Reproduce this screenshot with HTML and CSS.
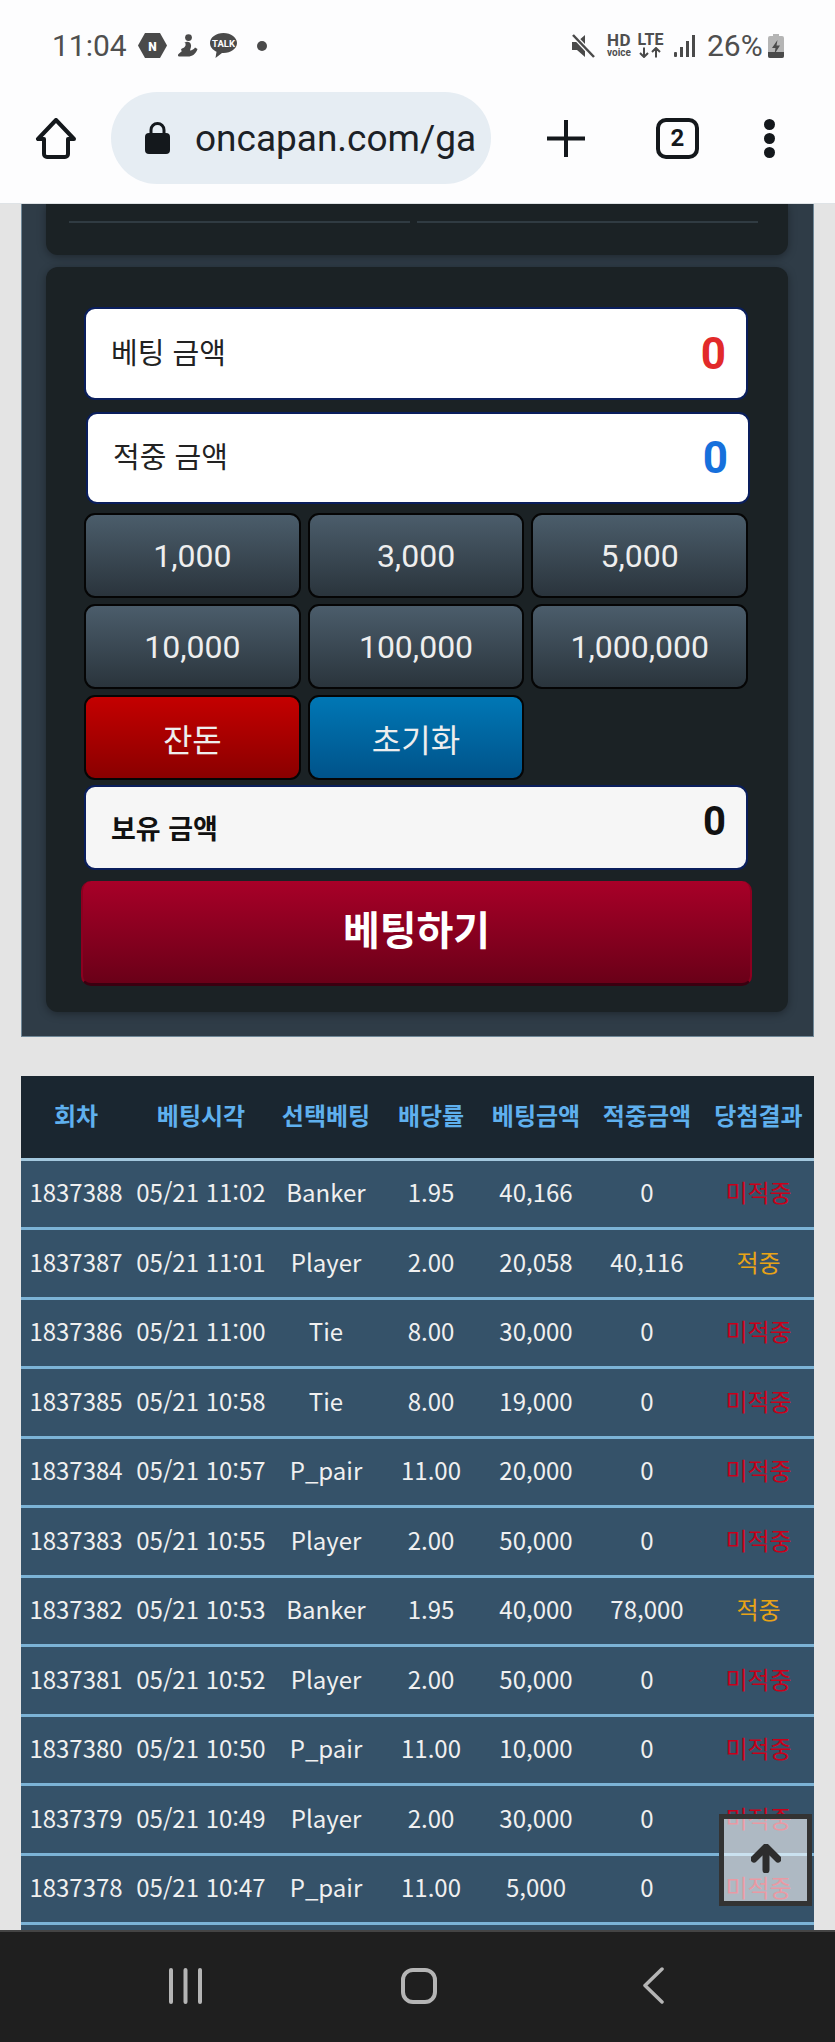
FILE: index.html
```html
<!DOCTYPE html>
<html lang="ko">
<head>
  <meta charset="UTF-8" />
  <meta name="viewport" content="width=device-width, initial-scale=1.0" />
  <title>oncapan</title>
  <link rel="stylesheet" href="styles.css">
</head>
<body>
  <!-- 상태바 + 브라우저 툴바 -->
  <header class="phone-top">
    <div class="status-bar">
      <div class="status-left">
        <span class="clock">11:04</span>
        <svg class="ico-n" viewBox="0 0 29 25"><polygon points="7,0 22,0 29,12.5 22,25 7,25 0,12.5" fill="#4a4a4a"/><text x="14.5" y="17.5" text-anchor="middle" class="svg-n">N</text></svg>
        <svg class="ico-person" viewBox="0 0 20 23"><circle cx="10.5" cy="3.6" r="3.4" fill="#4a4a4a"/><path d="M6.5 8.5c3-1.5 6-.5 6.5 2.500 .3 2-.5 3.500-1 5.500 2-.2 4-1.200 5-3l2.500 1.500c-1.500 5-5.500 7.500-9.500 7.500H1.500c-1.500 0-2-1.500-1-2.500l3.500-3c-1.500-1-1-2 0-2.500 1.500-.5 3-1.500 3.500-3 .2-1 .1-2-.5-3.500z" fill="#4a4a4a"/></svg>
        <svg class="ico-talk" viewBox="0 0 27 25"><path d="M13.500 0C6 0 0 4.400 0 10c0 3.700 2.600 6.900 6.500 8.700L5.500 25l6.500-5c.5 0 1 .1 1.500 .1 7.500 0 13.500-4.500 13.500-10S21 0 13.500 0z" fill="#4a4a4a"/><text x="13.500" y="13.500" text-anchor="middle" class="svg-talk">TALK</text></svg>
        <span class="dot"></span>
      </div>
      <div class="status-right">
        <svg class="ico-mute" viewBox="0 0 23 24"><path d="M0 8h5l8-7v22l-8-7H0z" fill="#4a4a4a"/><path d="M1 1l21 22" stroke="#fdfdfe" stroke-width="5"/><path d="M1 1l21 22" stroke="#4a4a4a" stroke-width="2.500"/></svg>
        <div class="hd"><b>HD</b><span>voice</span></div>
        <div class="lte"><b>LTE</b><svg viewBox="0 0 24 10"><path d="M6 0v9M2 5.500l4 4 4-4M18 10V1M14 4.500l4-4 4 4" fill="none" stroke="#4a4a4a" stroke-width="2"/></svg></div>
        <svg class="ico-signal" viewBox="0 0 21 22"><rect x="0" y="17" width="3" height="5" rx="1" fill="#4a4a4a"/><rect x="6" y="12" width="3" height="10" fill="#4a4a4a"/><rect x="12" y="6" width="3" height="16" fill="#4a4a4a"/><rect x="18" y="0" width="3" height="22" fill="#4a4a4a"/></svg>
        <span class="batt-text">26%</span>
        <svg class="ico-batt" viewBox="0 0 16 24"><path d="M5 0h6v2h3a2 2 0 0 1 2 2v18a2 2 0 0 1-2 2H2a2 2 0 0 1-2-2V4a2 2 0 0 1 2-2h3z" fill="#b5b5b5"/><path d="M0 18h16v4a2 2 0 0 1-2 2H2a2 2 0 0 1-2-2z" fill="#4a4a4a"/><path d="M9.500 6L4 14h3.500L6.500 20 12 11.500H8.500z" fill="#4a4a4a"/></svg>
      </div>
    </div>
    <div class="toolbar">
      <svg class="ico-home" viewBox="0 0 42 41"><path d="M21 2L3 21h6v15a3 3 0 0 0 3 3h18a3 3 0 0 0 3-3V21h6z" fill="none" stroke="#14181c" stroke-width="4" stroke-linejoin="round"/></svg>
      <div class="url-pill">
        <svg class="ico-lock" viewBox="0 0 25 32"><path d="M6 13V8a6.500 6.500 0 0 1 13 0v5" fill="none" stroke="#14181c" stroke-width="3"/><rect x="0" y="11" width="25" height="21" rx="4" fill="#14181c"/></svg>
        <span class="url-text">oncapan.com/ga</span>
      </div>
      <svg class="ico-plus" viewBox="0 0 38 37"><path d="M19 0v37M0 18.500h38" stroke="#14181c" stroke-width="4" stroke-linecap="round"/></svg>
      <div class="tab-count">2</div>
      <div class="kebab"><span></span><span></span><span></span></div>
    </div>
  </header>

  <main class="page">
    <section class="outer-panel">
      <div class="inner-panel top-stub">
        <div class="stub-lines"><span></span><span></span></div>
      </div>
      <div class="inner-panel bet-panel">
        <div class="amount-box">
          <span class="amount-label">베팅 금액</span>
          <span class="amount-val red">0</span>
        </div>
        <div class="amount-box shifted">
          <span class="amount-label">적중 금액</span>
          <span class="amount-val blue">0</span>
        </div>
        <div class="chip-grid">
          <button class="chip">1,000</button>
          <button class="chip">3,000</button>
          <button class="chip">5,000</button>
          <button class="chip">10,000</button>
          <button class="chip">100,000</button>
          <button class="chip">1,000,000</button>
          <button class="chip chip-red">잔돈</button>
          <button class="chip chip-blue">초기화</button>
        </div>
        <div class="amount-box holding">
          <span class="amount-label">보유 금액</span>
          <span class="amount-val">0</span>
        </div>
        <button class="bet-btn">베팅하기</button>
      </div>
    </section>

    <table class="history">
      <colgroup>
        <col class="c1"><col class="c2"><col class="c3"><col class="c4"><col class="c5"><col class="c6"><col class="c7">
      </colgroup>
      <thead>
        <tr><th>회차</th><th>베팅시각</th><th>선택베팅</th><th>배당률</th><th>베팅금액</th><th>적중금액</th><th>당첨결과</th></tr>
      </thead>
      <tbody>
        <tr><td>1837388</td><td>05/21 11:02</td><td>Banker</td><td>1.95</td><td>40,166</td><td>0</td><td class="miss">미적중</td></tr>
        <tr><td>1837387</td><td>05/21 11:01</td><td>Player</td><td>2.00</td><td>20,058</td><td>40,116</td><td class="hit">적중</td></tr>
        <tr><td>1837386</td><td>05/21 11:00</td><td>Tie</td><td>8.00</td><td>30,000</td><td>0</td><td class="miss">미적중</td></tr>
        <tr><td>1837385</td><td>05/21 10:58</td><td>Tie</td><td>8.00</td><td>19,000</td><td>0</td><td class="miss">미적중</td></tr>
        <tr><td>1837384</td><td>05/21 10:57</td><td>P_pair</td><td>11.00</td><td>20,000</td><td>0</td><td class="miss">미적중</td></tr>
        <tr><td>1837383</td><td>05/21 10:55</td><td>Player</td><td>2.00</td><td>50,000</td><td>0</td><td class="miss">미적중</td></tr>
        <tr><td>1837382</td><td>05/21 10:53</td><td>Banker</td><td>1.95</td><td>40,000</td><td>78,000</td><td class="hit">적중</td></tr>
        <tr><td>1837381</td><td>05/21 10:52</td><td>Player</td><td>2.00</td><td>50,000</td><td>0</td><td class="miss">미적중</td></tr>
        <tr><td>1837380</td><td>05/21 10:50</td><td>P_pair</td><td>11.00</td><td>10,000</td><td>0</td><td class="miss">미적중</td></tr>
        <tr><td>1837379</td><td>05/21 10:49</td><td>Player</td><td>2.00</td><td>30,000</td><td>0</td><td class="miss">미적중</td></tr>
        <tr><td>1837378</td><td>05/21 10:47</td><td>P_pair</td><td>11.00</td><td>5,000</td><td>0</td><td class="miss">미적중</td></tr>
        <tr><td colspan="7"></td></tr>
      </tbody>
    </table>

    <!-- 위로 버튼 -->
    <button class="to-top">
      <svg viewBox="0 0 30 29"><path d="M15 26V4M3 15L15 3l12 12" fill="none" stroke="#2d2d2d" stroke-width="7" stroke-linecap="round" stroke-linejoin="round"/></svg>
    </button>
  </main>

  <nav class="phone-nav">
    <svg class="ico-recent" viewBox="0 0 33 36"><path d="M2 2v32M16.500 2v32M31 2v32" stroke="#b5b5b5" stroke-width="4" stroke-linecap="round"/></svg>
    <svg class="ico-square" viewBox="0 0 36 36"><rect x="2" y="2" width="32" height="32" rx="10" fill="none" stroke="#b5b5b5" stroke-width="4"/></svg>
    <svg class="ico-back" viewBox="0 0 21 37"><path d="M19 2L2 18.500 19 35" fill="none" stroke="#b5b5b5" stroke-width="3.500" stroke-linecap="round" stroke-linejoin="round"/></svg>
  </nav>
</body>
</html>
```

FILE: styles.css
```css
* { box-sizing: border-box; }
body {
  margin: 0;
  width: 835px;
  height: 2042px;
  display: flex;
  flex-direction: column;
  overflow: hidden;
  font-family: "Noto Sans CJK KR", "Noto Sans", sans-serif;
  background: #e4e4e4;
}

/* 상태바 */
.phone-top {
  height: 204px;
  flex: none;
  background: #fdfdfe;
  border-bottom: 1px solid #dfe3e6;
}
.status-bar {
  height: 91px;
  padding: 0 51px 0 52px;
  display: flex;
  align-items: center;
  justify-content: space-between;
  color: #4f4f4f;
  font-family: Roboto, sans-serif;
}
.status-left, .status-right {
  display: flex;
  align-items: center;
}
.clock { font-size: 30px; width: 75px; }
.ico-n { width: 29px; height: 25px; margin-left: 11px; }
.ico-person { width: 20px; height: 23px; margin-left: 11px; }
.ico-talk { width: 27px; height: 25px; margin-left: 12px; }
.svg-n { font: 900 12px Roboto, sans-serif; fill: #fdfdfe; }
.svg-talk { font: 700 9.500px Roboto, sans-serif; fill: #fdfdfe; }
.dot {
  width: 10px;
  height: 10px;
  border-radius: 50%;
  background: #4a4a4a;
  margin-left: 20px;
}
.ico-mute { width: 23px; height: 24px; }
.hd {
  width: 26px;
  margin-left: 11px;
  text-align: center;
  line-height: 1;
}
.hd b { display: block; font-size: 17px; line-height: 14px; letter-spacing: .5px; }
.hd span { display: block; font-size: 10px; font-weight: 700; line-height: 11px; }
.lte { width: 27px; margin-left: 5px; line-height: 1; }
.lte b { display: block; font-size: 16px; line-height: 13px; text-align: center; }
.lte svg { display: block; width: 24px; height: 11px; margin: 1px 0 0 1px; }
.ico-signal { width: 21px; height: 22px; margin-left: 10px; }
.batt-text { font-size: 30px; margin-left: 12px; width: 56px; line-height: 1; }
.ico-batt { width: 16px; height: 24px; margin-left: 5px; }

/* 브라우저 툴바 */
.toolbar {
  height: 94px;
  display: flex;
  align-items: center;
  padding-left: 35px;
}
.ico-home { width: 42px; height: 41px; }
.url-pill {
  width: 380px;
  height: 92px;
  margin-left: 34px;
  padding-left: 34px;
  border-radius: 46px;
  background: #e6edf3;
  display: flex;
  align-items: center;
}
.ico-lock { width: 25px; height: 32px; flex: none; }
.url-text {
  margin-left: 25px;
  font: 37px Roboto, sans-serif;
  color: #1c2126;
  white-space: nowrap;
}
.ico-plus { width: 38px; height: 37px; margin-left: 56px; }
.tab-count {
  width: 43px;
  height: 41px;
  margin-left: 71px;
  border: 4px solid #14181c;
  border-radius: 10px;
  font: 700 24px/33px Roboto, sans-serif;
  text-align: center;
  color: #14181c;
}
.kebab {
  margin-left: 65px;
  display: flex;
  flex-direction: column;
  gap: 3px;
}
.kebab span {
  width: 11px;
  height: 11px;
  border-radius: 50%;
  background: #14181c;
}

/* 본문 */
.page {
  flex: 1;
  min-height: 0;
  overflow: hidden;
  position: relative;
  padding: 0 21px;
}
.outer-panel {
  height: 833px;
  padding: 0 25px 0 24px;
  background: #2f3c47;
  border: 1px solid #6f8797;
  border-top: 0;
}
.inner-panel {
  background: #1b2225;
  border-radius: 0 0 12px 12px;
  box-shadow: 0 2px 8px rgba(0, 0, 0, .35);
}
.top-stub {
  height: 51px;
  padding: 17px 30px 0 23px;
}
.stub-lines { display: flex; gap: 7px; }
.stub-lines span { flex: 1; height: 2px; background: #303b42; }

.bet-panel {
  margin-top: 12px;
  height: 745px;
  padding: 40px 40px 0 38px;
  border-radius: 12px;
}
.amount-box {
  height: 93px;
  padding: 0 20px 0 25px;
  background: #fff;
  border: 2px solid #0a1e5c;
  border-radius: 11px;
  display: flex;
  align-items: center;
  justify-content: space-between;
  margin-bottom: 12px;
  color: #222;
}
.amount-box.shifted {
  height: 92px;
  margin-left: 2px;
  margin-right: -2px;
  margin-bottom: 9px;
}
.amount-label { font-size: 29px; line-height: 1; margin-top: -5px; }
.amount-val { font: 700 44px/1 Roboto, sans-serif; }
.amount-val.red { color: #e22a2a; }
.amount-val.blue { color: #1670dc; }

.chip-grid {
  display: grid;
  grid-template-columns: repeat(3, 1fr);
  grid-auto-rows: 85px;
  gap: 6px 7px;
}
.chip {
  border: 2px solid #050505;
  border-radius: 11px;
  background: linear-gradient(#4b5d6b, #2a343c);
  color: #eee;
  font: 32px Roboto, sans-serif;
  padding: 0;
}
.chip-red { background: linear-gradient(#c40000, #8a0000); font-family: "Noto Sans CJK KR", sans-serif; }
.chip-blue { background: linear-gradient(#0077b5, #00538a); font-family: "Noto Sans CJK KR", sans-serif; }

.amount-box.holding {
  height: 85px;
  margin: 5px 0 11px;
  background: #f6f6f6;
  color: #111;
}
.holding .amount-label { font-size: 27px; font-weight: 700; margin-top: -1px; }
.holding .amount-val { font-size: 40px; margin-top: -12px; }

.bet-btn {
  display: block;
  width: 671px;
  height: 105px;
  margin-left: -3px;
  padding: 0 0 8px;
  border: 2px solid #8c0020;
  border-top: 0;
  border-bottom: 3px solid #3a0010;
  border-radius: 10px;
  background: linear-gradient(#a80028, #6a0018);
  color: #fff;
  font: 700 40px "Noto Sans CJK KR", sans-serif;
}

/* 배팅 내역 */
.history {
  width: 793px;
  margin-top: 39px;
  table-layout: fixed;
  border-collapse: collapse;
}
.c1 { width: 110px; }
.c2 { width: 140px; }
.c3 { width: 110px; }
.c4 { width: 100px; }
.c5 { width: 110px; }
.c6 { width: 112px; }
.c7 { width: 111px; }
.history th {
  height: 83px;
  padding: 0 0 5px;
  background: #1a2630;
  color: #5fb0ee;
  font-size: 24px;
  font-weight: 700;
  border-bottom: 3px solid #a3c8de;
}
.history td {
  height: 69.5px;
  padding: 0 0 4px;
  background: #355269;
  color: #f0f0f0;
  font-size: 24px;
  text-align: center;
  white-space: nowrap;
  border-bottom: 3px solid #7cb3d6;
}
.history td.miss { color: #c8001a; }
.history td.hit { color: #e8a317; }

.to-top {
  position: absolute;
  right: 23px;
  bottom: 24px;
  width: 93px;
  height: 92px;
  padding: 0;
  border: 5px solid #333;
  background: rgba(255, 255, 255, .6);
  display: flex;
  align-items: center;
  justify-content: center;
}
.to-top svg { width: 30px; height: 29px; margin-top: -4px; }

/* 하단 내비 */
.phone-nav {
  height: 112px;
  flex: none;
  position: relative;
  background: #1f1f1f;
  border-top: 2px solid #444;
  display: flex;
  align-items: center;
  padding: 0 0 3px 169px;
}
.ico-recent { width: 33px; height: 36px; }
.ico-square { width: 36px; height: 36px; margin-left: 199px; }
.ico-back { width: 21px; height: 37px; margin-left: 206px; }
```
